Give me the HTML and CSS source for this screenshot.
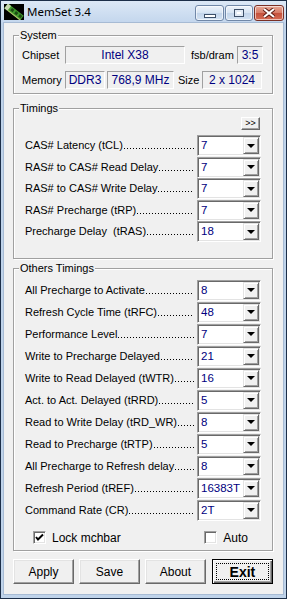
FILE: index.html
```html
<html lang="en">
<head>
    <title>MemSet 3.4</title>
    <meta name="viewport" content="width=device-width, initial-scale=1">
    <link rel="stylesheet" href="styles.css">
</head>
<body>
  <div class="window">
    <div class="titlebar">
      <svg class="app-icon" width="20" height="16" viewBox="0 0 20 16">
        <rect width="20" height="16" fill="#000"/>
        <g transform="rotate(38 10 8)">
          <rect x="0" y="5" width="20" height="6" fill="#3f9a2c"/>
          <rect x="0" y="5" width="4" height="6" fill="#c8d8b0"/>
          <rect x="6" y="6" width="3" height="3" fill="#1d4a14"/>
          <rect x="11" y="6" width="3" height="3" fill="#1d4a14"/>
          <rect x="16" y="6" width="3" height="3" fill="#1d4a14"/>
          <rect x="4" y="10" width="16" height="1" fill="#b8c070"/>
        </g>
      </svg>
      <span class="title">MemSet 3.4</span>
      <div class="caption-btns">
        <span class="cap cap-min"><i></i></span>
        <span class="cap cap-max"><i></i></span>
        <span class="cap cap-close">
          <svg width="14" height="10" viewBox="0 0 14 10">
            <path d="M2 1 L12 9 M12 1 L2 9" stroke="#5a1a12" stroke-width="4"/>
            <path d="M2 1 L12 9 M12 1 L2 9" stroke="#fff" stroke-width="2.2"/>
          </svg>
        </span>
      </div>
    </div>

    <div class="client">
      <div class="group system">
        <span class="legend">System</span>
        <div class="sys-row">
          <span class="sys-label">Chipset</span>
          <span class="field chipset">Intel X38</span>
          <span class="sys-label fsb">fsb/dram</span>
          <span class="field ratio">3:5</span>
        </div>
        <div class="sys-row">
          <span class="sys-label">Memory</span>
          <span class="field mtype">DDR3</span>
          <span class="field freq">768,9 MHz</span>
          <span class="sys-label size-lbl">Size</span>
          <span class="field msize">2 x 1024</span>
        </div>
      </div>

      <div class="group timings">
        <span class="legend">Timings</span>
        <div class="more-row"><span class="btn-more">&gt;&gt;</span></div>
        <div class="trow"><span class="tlabel"><span>CAS# Latency (tCL)</span><span class="dots"></span></span><span class="combo"><span class="cval">7</span><span class="cbtn"><i></i></span></span></div>
        <div class="trow"><span class="tlabel"><span>RAS# to CAS# Read Delay</span><span class="dots"></span></span><span class="combo"><span class="cval">7</span><span class="cbtn"><i></i></span></span></div>
        <div class="trow"><span class="tlabel"><span>RAS# to CAS# Write Delay</span><span class="dots"></span></span><span class="combo"><span class="cval">7</span><span class="cbtn"><i></i></span></span></div>
        <div class="trow"><span class="tlabel"><span>RAS# Precharge (tRP)</span><span class="dots"></span></span><span class="combo"><span class="cval">7</span><span class="cbtn"><i></i></span></span></div>
        <div class="trow"><span class="tlabel"><span>Precharge Delay&nbsp; (tRAS)</span><span class="dots"></span></span><span class="combo"><span class="cval">18</span><span class="cbtn"><i></i></span></span></div>
      </div>

      <div class="group others">
        <span class="legend">Others Timings</span>
        <div class="orow"><span class="tlabel"><span>All Precharge to Activate</span><span class="dots"></span></span><span class="combo"><span class="cval">8</span><span class="cbtn"><i></i></span></span></div>
        <div class="orow"><span class="tlabel"><span>Refresh Cycle Time (tRFC)</span><span class="dots"></span></span><span class="combo"><span class="cval">48</span><span class="cbtn"><i></i></span></span></div>
        <div class="orow"><span class="tlabel"><span>Performance Level</span><span class="dots"></span></span><span class="combo"><span class="cval">7</span><span class="cbtn"><i></i></span></span></div>
        <div class="orow"><span class="tlabel"><span>Write to Precharge Delayed</span><span class="dots"></span></span><span class="combo"><span class="cval">21</span><span class="cbtn"><i></i></span></span></div>
        <div class="orow"><span class="tlabel"><span>Write to Read Delayed (tWTR)</span><span class="dots"></span></span><span class="combo"><span class="cval">16</span><span class="cbtn"><i></i></span></span></div>
        <div class="orow"><span class="tlabel"><span>Act. to Act. Delayed (tRRD)</span><span class="dots"></span></span><span class="combo"><span class="cval">5</span><span class="cbtn"><i></i></span></span></div>
        <div class="orow"><span class="tlabel"><span>Read to Write Delay (tRD_WR)</span><span class="dots"></span></span><span class="combo"><span class="cval">8</span><span class="cbtn"><i></i></span></span></div>
        <div class="orow"><span class="tlabel"><span>Read to Precharge (tRTP)</span><span class="dots"></span></span><span class="combo"><span class="cval">5</span><span class="cbtn"><i></i></span></span></div>
        <div class="orow"><span class="tlabel"><span>All Precharge to Refresh delay</span><span class="dots"></span></span><span class="combo"><span class="cval">8</span><span class="cbtn"><i></i></span></span></div>
        <div class="orow"><span class="tlabel"><span>Refresh Period (tREF)</span><span class="dots"></span></span><span class="combo"><span class="cval">16383T</span><span class="cbtn"><i></i></span></span></div>
        <div class="orow"><span class="tlabel"><span>Command Rate (CR)</span><span class="dots"></span></span><span class="combo"><span class="cval">2T</span><span class="cbtn"><i></i></span></span></div>

        <div class="check-row">
          <span class="check lock">
            <span class="box">
              <svg width="9" height="9" viewBox="0 0 9 9"><path d="M1 4 L3 6.5 L8 1.5" stroke="#000" stroke-width="2" fill="none"/></svg>
            </span>
            Lock mchbar
          </span>
          <span class="check auto"><span class="box"></span>Auto</span>
        </div>
      </div>

      <div class="btn-row">
        <span class="btn">Apply</span>
        <span class="btn">Save</span>
        <span class="btn">About</span>
        <span class="btn btn-default"><span class="focus">Exit</span></span>
      </div>
    </div>
  </div>
</body>
</html>
```

FILE: styles.css
```css
* {
    box-sizing: border-box;
}

body {
    margin: 0;
    background: #fff;
    font-family: "Liberation Sans", Arial, sans-serif;
    font-size: 11px;
    color: #000;
}

.window {
    width: 287px;
    height: 599px;
    border: 1px solid #1c2e48;
    background: #bfd3ea;
    padding: 0 3px 4px;
    display: flex;
    flex-direction: column;
}

/* title bar */
.titlebar {
    height: 22px;
    margin: 0 -3px;
    padding: 3px 2px 0 3px;
    display: flex;
    align-items: flex-start;
    background: linear-gradient(#dce8f6, #c3d6ed);
}

.app-icon {
    display: block;
    flex: none;
}

.title {
    font-family: "Noto Sans", sans-serif;
    font-size: 11.5px;
    line-height: 16px;
    margin-left: 3px;
    color: #000;
}

.caption-btns {
    margin-left: auto;
    display: flex;
    gap: 1px;
    margin-top: 1px;
}

.cap {
    height: 16px;
    border: 1px solid #7188a8;
    border-radius: 3px;
    display: flex;
    align-items: center;
    justify-content: center;
    background: linear-gradient(#eef4fb 0%, #d6e3f2 50%, #c2d4ea 51%, #d4e2f2 100%);
    box-shadow: inset 0 0 0 1px rgba(255,255,255,0.6);
}

.cap-min { width: 29px; }
.cap-max { width: 28px; }
.cap-close {
    width: 30px;
    border-color: #7a2f25;
    background: linear-gradient(#e8a896 0%, #d67a66 50%, #c4513c 51%, #d66c55 100%);
}

.cap-min i {
    width: 12px;
    height: 4px;
    margin-top: 5px;
    background: #fff;
    border: 1px solid #3d4f68;
}

.cap-max i {
    width: 10px;
    height: 8px;
    background: #fff;
    border: 1px solid #3d4f68;
    box-shadow: inset 0 0 0 2px #e2ebf6;
}

.cap-close svg {
    display: block;
}

/* client area */
.client {
    flex: 1;
    background: #f0f0f0;
    padding: 12px 10px 0 9px;
    box-shadow: 0 0 0 1px #a7bbd4;
}

.group {
    position: relative;
    border: 1px solid #a0a0a0;
    box-shadow: inset 1px 1px 0 #fff, 1px 1px 0 #fff;
}

.legend {
    position: absolute;
    top: -7px;
    left: 5px;
    padding: 0 1px;
    line-height: 13px;
    background: #f0f0f0;
}

/* system box */
.system {
    height: 59px;
    padding: 10px 0 0 8px;
}

.sys-row {
    display: flex;
    align-items: center;
    height: 18px;
    margin-bottom: 7px;
}

.sys-label {
    width: 43px;
}

.sys-label.fsb {
    width: 46px;
    margin-left: 6px;
}

.sys-label.size-lbl {
    width: 24px;
    margin-left: 4px;
}

.field {
    height: 18px;
    line-height: 16px;
    text-align: center;
    color: #000080;
    font-size: 12px;
    border: 1px solid;
    border-color: #a0a0a0 #fff #fff #a0a0a0;
}

.chipset { width: 120px; }
.ratio { width: 26px; }
.mtype { width: 40px; }
.freq { width: 67px; margin-left: 2px; }
.msize { width: 60px; }

/* timings */
.timings {
    margin-top: 14px;
    height: 151px;
    padding: 8px 11px 0 11px;
}

.others {
    margin-top: 9px;
    height: 283px;
    padding: 10px 11px 0 11px;
}

.more-row {
    display: flex;
    justify-content: flex-end;
    height: 13px;
    margin-bottom: 5px;
    padding-right: 1px;
}

.btn-more {
    width: 19px;
    height: 13px;
    font-size: 9px;
    line-height: 10px;
    text-align: center;
    border: 1px solid;
    border-color: #fff #696969 #696969 #fff;
    box-shadow: inset -1px -1px 0 #a0a0a0;
}

.trow, .orow {
    display: flex;
    align-items: center;
}

.trow { height: 21.5px; }
.orow { height: 22px; }

.tlabel {
    width: 172px;
    height: 13px;
    line-height: 13px;
    padding-right: 3px;
    display: flex;
    white-space: nowrap;
}

.tlabel span {
    flex: none;
}

/* dot leader drawn as a repeating 1px pattern on the baseline */
.tlabel .dots {
    flex: 1;
    align-self: flex-end;
    height: 1px;
    margin: 0 0 3px 1px;
    background: linear-gradient(to right, #000 1px, transparent 1px) 0 0 / 3px 1px repeat-x;
}

.combo {
    width: 64px;
    height: 21px;
    display: flex;
    background: #fff;
    border: 1px solid;
    border-color: #a0a0a0 #fff #fff #a0a0a0;
    box-shadow: inset 1px 1px 0 #696969, inset -1px -1px 0 #e3e3e3;
    padding: 1px;
}

.cval {
    flex: 1;
    min-width: 0;
    color: #000080;
    font-size: 11.5px;
    line-height: 17px;
    padding-left: 2px;
    white-space: nowrap;
}

.cbtn {
    flex: none;
    width: 16px;
    height: 17px;
    background: #f0f0f0;
    border: 1px solid;
    border-color: #e3e3e3 #696969 #696969 #e3e3e3;
    box-shadow: inset 1px 1px 0 #fff, inset -1px -1px 0 #a0a0a0;
    display: flex;
    align-items: center;
    justify-content: center;
}

.cbtn i {
    width: 0;
    height: 0;
    border-left: 4px solid transparent;
    border-right: 4px solid transparent;
    border-top: 4px solid #000;
}

/* checkboxes */
.check-row {
    margin-top: 6px;
    height: 21px;
    display: flex;
    align-items: center;
    font-size: 12px;
}

.check {
    display: flex;
    align-items: center;
}

.check.lock {
    margin-left: 8px;
}

.check.auto {
    margin-left: auto;
    margin-right: 13px;
}

.box {
    width: 13px;
    height: 13px;
    margin-right: 6px;
    background: #fff;
    border: 1px solid;
    border-color: #a0a0a0 #fff #fff #a0a0a0;
    box-shadow: inset 1px 1px 0 #696969, inset -1px -1px 0 #e3e3e3;
    display: flex;
    align-items: center;
    justify-content: center;
}

.box svg {
    display: block;
}

/* buttons */
.btn-row {
    margin-top: 8px;
    display: flex;
    gap: 5px;
}

.btn {
    width: 62px;
    height: 25px;
    font-size: 12px;
    display: flex;
    align-items: center;
    justify-content: center;
    border: 1px solid;
    border-color: #fff #696969 #696969 #fff;
    box-shadow: inset -1px -1px 0 #a0a0a0, inset 1px 1px 0 #e3e3e3;
}

.btn-default {
    margin-left: 1px;
    border: 1px solid #000;
    box-shadow: inset 1px 1px 0 #fff, inset -1px -1px 0 #696969, inset -2px -2px 0 #a0a0a0;
    padding: 3px;
}

.focus {
    flex: 1;
    align-self: stretch;
    border: 1px dotted #000;
    font-weight: bold;
    font-size: 14px;
    display: flex;
    align-items: center;
    justify-content: center;
}
```
